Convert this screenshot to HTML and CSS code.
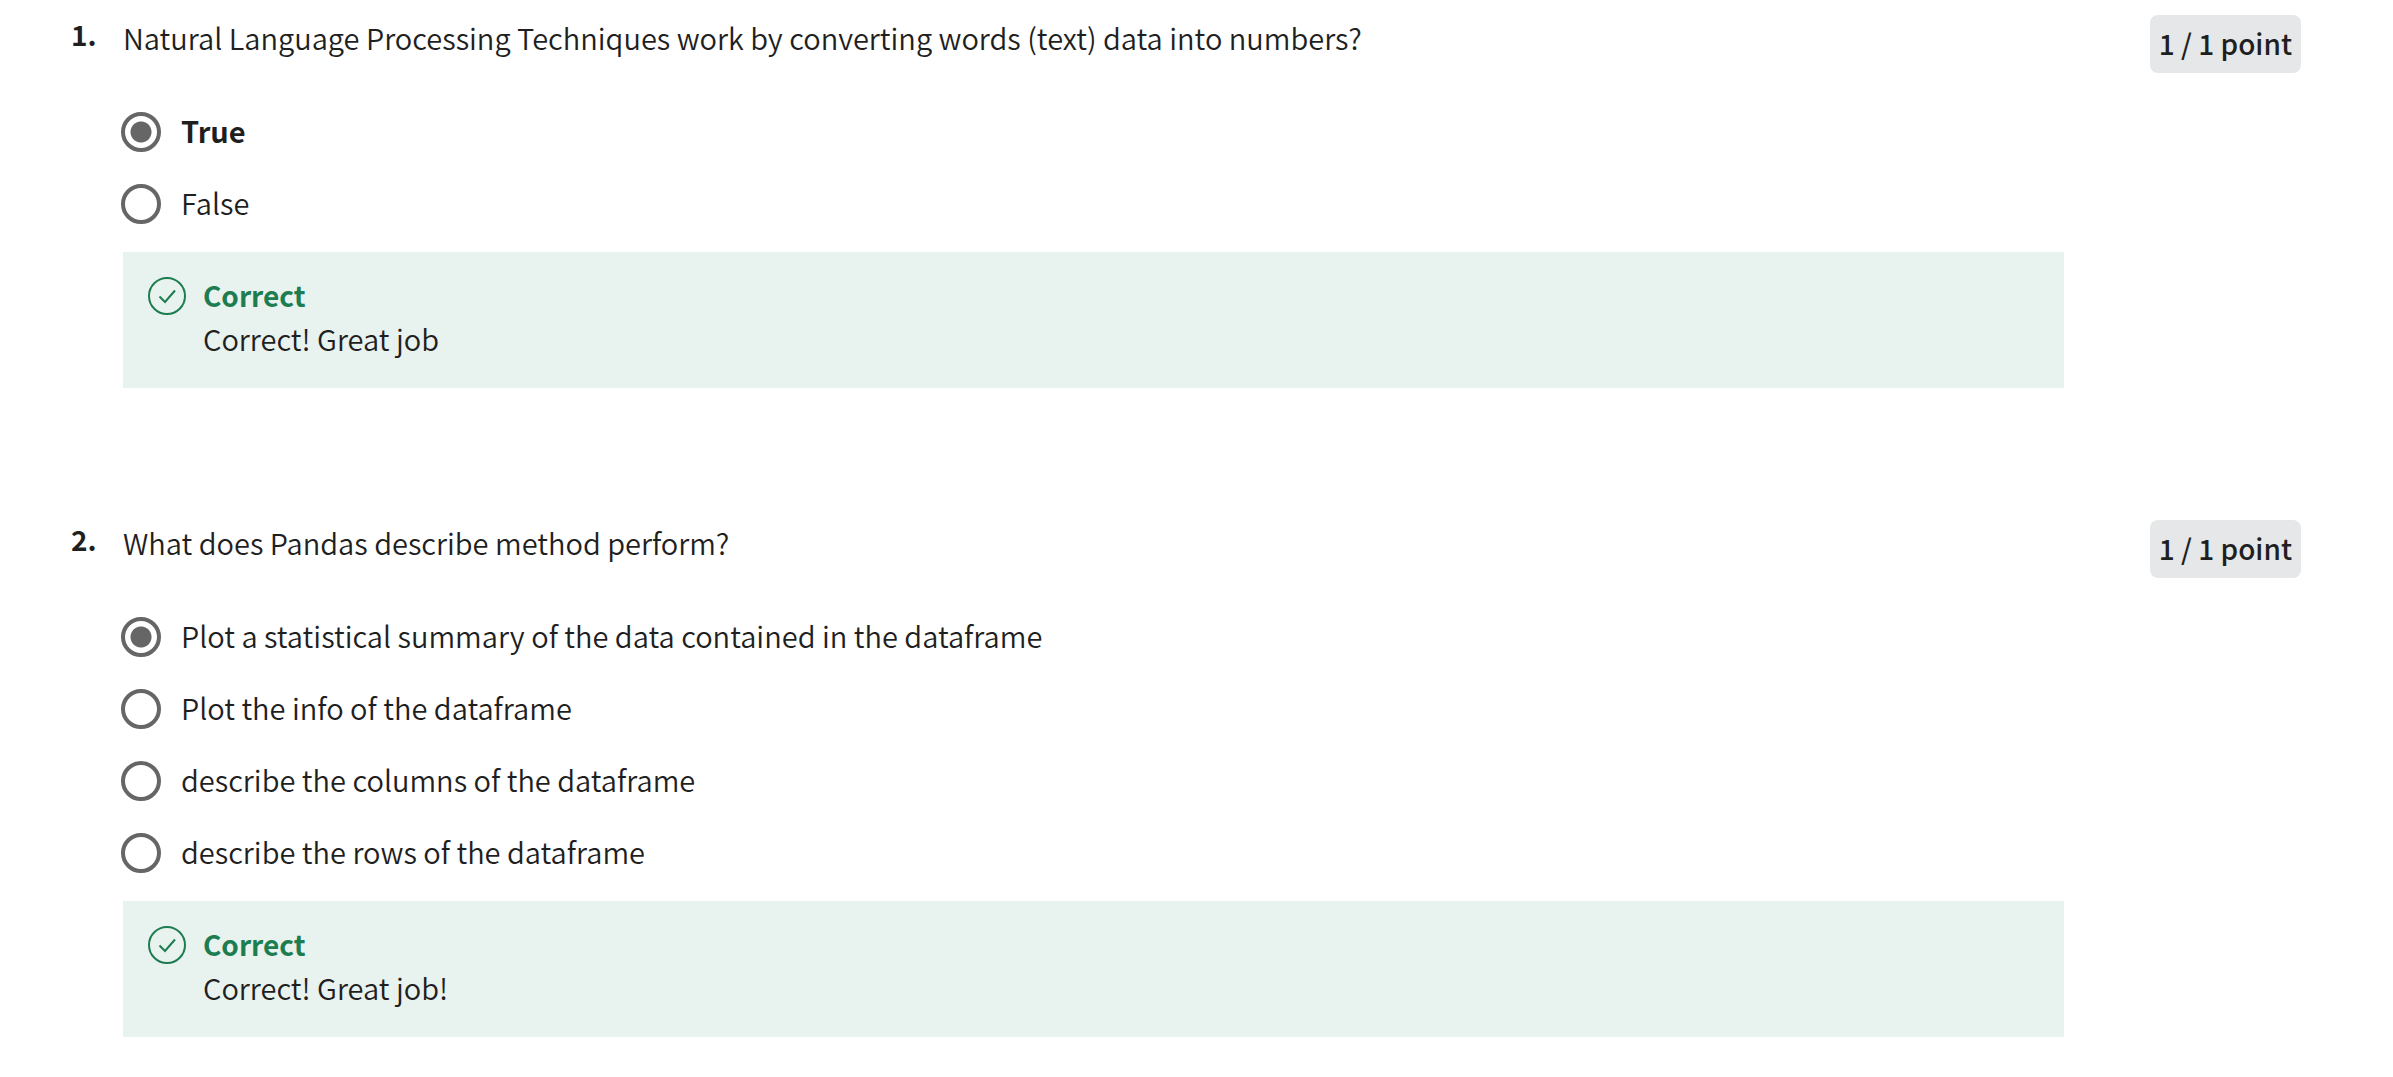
FILE: index.html
```html
<!DOCTYPE html>
<html lang="en">
<head>
  <meta charset="utf-8">
  <meta name="viewport" content="width=device-width, initial-scale=1">
  <title>Quiz results</title>
  <link rel="stylesheet" href="styles.css">
</head>
<body>
  <main class="quiz">
    <section class="question">
      <span class="number">1.</span>
      <fieldset class="body">
        <legend class="prompt">Natural Language Processing Techniques work by converting words (text) data into numbers?</legend>
        <div class="options">
          <label class="option chosen"><input class="radio" type="radio" name="q1" checked><span class="answer">True</span></label>
          <label class="option"><input class="radio" type="radio" name="q1"><span class="answer">False</span></label>
        </div>
        <div class="feedback">
          <svg class="check" viewBox="0 0 38 38" aria-hidden="true"><circle cx="19" cy="19" r="18"/><path d="M11.500 19.500L17 25L27 13.500"/></svg>
          <div>
            <p class="verdict">Correct</p>
            <p class="note">Correct! Great job</p>
          </div>
        </div>
      </fieldset>
      <span class="points">1 / 1 point</span>
    </section>

    <section class="question">
      <span class="number">2.</span>
      <fieldset class="body">
        <legend class="prompt">What does Pandas describe method perform?</legend>
        <div class="options">
          <label class="option"><input class="radio" type="radio" name="q2" checked><span class="answer">Plot a statistical summary of the data contained in the dataframe</span></label>
          <label class="option"><input class="radio" type="radio" name="q2"><span class="answer">Plot the info of the dataframe</span></label>
          <label class="option"><input class="radio" type="radio" name="q2"><span class="answer">describe the columns of the dataframe</span></label>
          <label class="option"><input class="radio" type="radio" name="q2"><span class="answer">describe the rows of the dataframe</span></label>
        </div>
        <div class="feedback">
          <svg class="check" viewBox="0 0 38 38" aria-hidden="true"><circle cx="19" cy="19" r="18"/><path d="M11.500 19.500L17 25L27 13.500"/></svg>
          <div>
            <p class="verdict">Correct</p>
            <p class="note">Correct! Great job!</p>
          </div>
        </div>
      </fieldset>
      <span class="points">1 / 1 point</span>
    </section>
  </main>
</body>
</html>
```
FILE: styles.css
```css
* {
  box-sizing: border-box;
}

body {
  margin: 0;
  background: #fff;
  color: #1f1f1f;
  font-family: "Source Sans Pro", "Noto Sans CJK SC", sans-serif;
  font-size: 29px;
  font-weight: 350;
  line-height: 44px;
}

p {
  margin: 0;
}

.quiz {
  display: flex;
  flex-direction: column;
  gap: 132px;
  padding: 15px 92px 36px 71px;
}

.question {
  display: grid;
  grid-template-columns: 52px minmax(0, 1fr) auto;
  align-items: start;
}

.number {
  font-size: 28px;
  line-height: 38px;
  font-weight: 700;
}

.body {
  min-width: 0;
  margin: 0 86px 0 0;
  padding: 0;
  border: 0;
}

.prompt {
  padding: 0;
}

.options {
  margin: 37px 0 12px -2px;
}

.option {
  display: flex;
  align-items: center;
  gap: 20px;
  min-height: 72px;
}

.answer {
  padding-bottom: 4px;
}

.chosen {
  font-weight: 700;
}

.radio {
  appearance: none;
  flex: none;
  width: 40px;
  height: 40px;
  margin: 0;
  border: 4px solid #666;
  border-radius: 50%;
}

.radio:checked {
  background: radial-gradient(circle, #666 10px, transparent 11px);
}

.feedback {
  display: flex;
  gap: 17px;
  padding: 21px 25px 28px;
  background: #e8f2ee;
}

.check {
  flex: none;
  width: 38px;
  height: 38px;
  margin-top: 4px;
  fill: none;
  stroke: #1d7c50;
  stroke-width: 2;
}

.verdict {
  color: #1d7c50;
  font-size: 28px;
  font-weight: 700;
}

.note {
  line-height: 43px;
}

.points {
  padding: 6px 9px 8px;
  border-radius: 8px;
  background: #e5e7e8;
  font-size: 28px;
  font-weight: 500;
}
```
